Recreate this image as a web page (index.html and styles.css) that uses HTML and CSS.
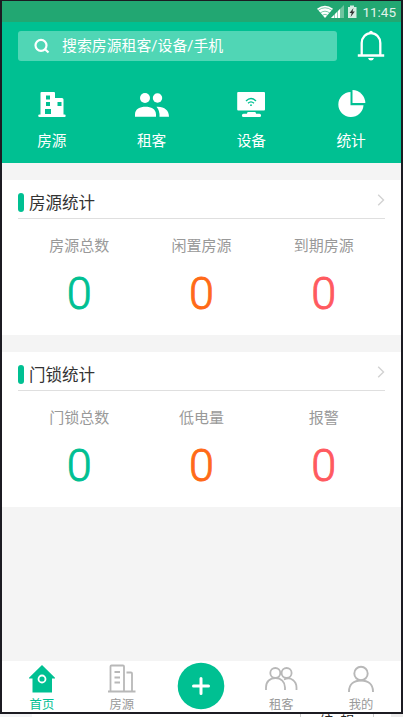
FILE: index.html
```html
<!DOCTYPE html>
<html lang="zh-CN">
<head>
<meta charset="utf-8">
<title>首页</title>
<link rel="stylesheet" href="styles.css">
</head>
<body>
<main class="phone">
  <div class="status">
    <svg class="status-icons" width="42" height="14" viewBox="0 0 42 14">
      <path d="M0 3.800Q8 -2.400 16 3.800L8 13Z" fill="#fff"/>
      <path d="M1 5.400Q8 .2 15 5.400M3.200 8Q8 4.400 12.800 8M5.400 10.200Q8 8.400 10.600 10.200" fill="none" stroke="#22a772" stroke-width=".6"/>
      <path d="M14 13L27 0V13Z" fill="#6fc5a0"/>
      <path d="M14 13L23 4V13Z" fill="#fff"/>
      <path d="M17.500 8V13M20.500 5V13" stroke="#22a772" stroke-width=".5"/>
      <path d="M31 2h2V.5h4V2h2.500v11h-8.500Z" fill="#d6eee4"/>
      <path d="M36.500 3L32.500 8h2.200L33.600 12l4.200-5.600h-2.300Z" fill="#333"/>
    </svg>
    <span>11:45</span>
  </div>
  <header class="header">
    <div class="search-row">
      <div class="search">
        <svg width="16" height="16" viewBox="0 0 16 16" fill="none" stroke="#fff" stroke-width="2.200"><circle cx="7" cy="7.300" r="5.500"/><path d="M11 11.300L14.500 14.500"/></svg>
        <span>搜索房源租客/设备/手机</span>
      </div>
      <svg class="bell" width="28" height="32" viewBox="0 0 28 32">
        <path d="M4.700 25V13a9.300 9.800 0 0 1 18.600 0V25M.8 25.500H27.200" fill="none" stroke="#fff" stroke-width="2.300"/>
        <circle cx="14" cy="2.500" r="1.800" fill="#fff"/><path d="M11 28h6q-.8 2.600-3 2.600T11 28Z" fill="#fff"/>
      </svg>
    </div>
    <nav class="shortcuts">
      <a><svg width="34" height="28" viewBox="0 0 34 28"><path fill="#fff" fill-rule="evenodd" d="M5.500 1Q5.500 0 6.500 0H19q1 0 1 1V6h7q1.500 0 1.500 1.500V22.500h1q1.200 0 1.200 1.300T29.500 25H4.500Q3.200 25 3.200 23.800T4.500 22.500h1ZM11 3.500v4h4v-4ZM11 10v4h4v-4ZM10 17v5h6V17ZM22.500 10v4h4v-4Z"/></svg><span>房源</span></a>
      <a><svg width="34" height="28" viewBox="0 0 34 28" fill="#fff"><circle cx="10" cy="6" r="5"/><circle cx="22.500" cy="6" r="4.700"/><path d="M0 24.800V22.500C0 17 5 14.800 10.500 14.800s10.500 2.200 10.500 7.700V24.800ZM21.500 14.800C29 14.300 34 18 34 24.800H24.500Q25 19 21.500 14.800Z"/></svg><span>租客</span></a>
      <a><svg width="34" height="28" viewBox="0 0 34 28"><rect x="3.200" y="0" width="27.800" height="18.500" rx="1" fill="#fff"/><path d="M14 20h7q1 0 1 1.800h3.500a1.600 1.600 0 0 1 0 3.200h-16a1.600 1.600 0 0 1 0-3.200H13q0-1.800 1-1.800Z" fill="#fff"/><path d="M12 9Q17 4 22 9M14 11.300Q17 8.500 20 11.300" fill="none" stroke="#00c092" stroke-width="1.300"/><circle cx="17" cy="13.200" r=".9" fill="#00c092"/></svg><span>设备</span></a>
      <a><svg width="34" height="28" viewBox="0 0 34 28" fill="#fff"><path d="M16.500 0A12.600 12.500 0 1 0 29.500 13.300H16.500Z"/><path d="M18.500-2A13 13 0 0 1 31.300 11H18.500Z"/></svg><span>统计</span></a>
    </nav>
  </header>
  <section class="card">
    <div class="card-head"><i class="mark"></i><h2>房源统计</h2><svg width="8" height="12" viewBox="0 0 8 12"><path d="M1.200 .8L6.500 6L1.200 11.200" fill="none" stroke="#d2d2d2" stroke-width="1.400"/></svg></div>
    <div class="stats">
      <div class="stat">房源总数<b class="green">0</b></div>
      <div class="stat">闲置房源<b class="orange">0</b></div>
      <div class="stat">到期房源<b class="red">0</b></div>
    </div>
  </section>
  <section class="card">
    <div class="card-head"><i class="mark"></i><h2>门锁统计</h2><svg width="8" height="12" viewBox="0 0 8 12"><path d="M1.200 .8L6.500 6L1.200 11.200" fill="none" stroke="#d2d2d2" stroke-width="1.400"/></svg></div>
    <div class="stats">
      <div class="stat">门锁总数<b class="green">0</b></div>
      <div class="stat">低电量<b class="orange">0</b></div>
      <div class="stat">报警<b class="red">0</b></div>
    </div>
  </section>
  <nav class="tabs">
    <a class="active"><svg width="34" height="30" viewBox="0 0 34 30"><path d="M17 1L30 13.700V14.500H27V28.500H7.500V14.500H4V13.700Z" fill="#00c092"/><circle cx="17" cy="15" r="3.500" fill="none" stroke="#fff" stroke-width="1.800"/></svg><span>首页</span></a>
    <a><svg width="34" height="30" viewBox="0 0 34 30" fill="none" stroke="#b8b8b8" stroke-width="1.800"><path d="M5.500 27V2.500q0-1 1-1H18q1 0 1 1V27M21.500 8.500H26q1 0 1 1V27M3 27.500H30.500M9.500 8h5.500M9.500 13.500h5.500M9.500 18.500h5.500"/></svg><span>房源</span></a>
    <a class="add"><svg width="48" height="48" viewBox="0 0 48 48"><circle cx="24" cy="24" r="23.300" fill="#00c092"/><path d="M24 16.500V31.500M16.500 24H31.500" stroke="#fff" stroke-width="3" stroke-linecap="round"/></svg></a>
    <a><svg width="34" height="30" viewBox="0 0 34 30" fill="none" stroke="#b8b8b8" stroke-width="1.800"><circle cx="11.300" cy="9" r="5"/><circle cx="22.600" cy="9" r="5"/><path d="M2 26V23.500C2 17.500 6 14 11.500 14S21 18 21 23.500V26M20 15.500C27 12 32.500 17.500 32.500 23.500V26"/></svg><span>租客</span></a>
    <a><svg width="34" height="30" viewBox="0 0 34 30" fill="none" stroke="#b8b8b8" stroke-width="1.900"><circle cx="17" cy="9.500" r="6.700"/><path d="M5 28V27.500C5 20 10 16.500 17 16.500S29 20 29 27.500V28"/></svg><span>我的</span></a>
  </nav>
</main>
<div class="below"><div class="edit">编&nbsp;&nbsp;辑</div></div>
</body>
</html>
```
FILE: styles.css
```css
* { box-sizing: border-box; }
body {
  margin: 0;
  height: 717px;
  overflow: hidden;
  background: #fff;
  font-family: Roboto, "Noto Sans CJK SC", sans-serif;
}
.phone {
  display: flex;
  flex-direction: column;
  height: 714px;
  border: solid #1c1b22;
  border-width: 1px 2px 2px;
  background: #f4f4f4;
}
svg { display: block; flex: none; }
.status {
  display: flex;
  justify-content: flex-end;
  align-items: center;
  height: 21px;
  padding-right: 5px;
  background: #22a772;
  color: #e0f3eb;
  font-size: 13.500px;
}
.status-icons { margin-right: 3px; }
.status span { padding-top: 1px; }
.header {
  height: 141px;
  padding: 9px 0 0;
  background: #00c092;
  color: #fff;
}
.search-row { display: flex; height: 32px; padding-left: 16px; }
.search {
  display: flex;
  align-items: center;
  width: 319px;
  height: 30px;
  padding-left: 16px;
  border-radius: 3px;
  background: #50d6b5;
  font-size: 14.900px;
  line-height: 30px;
}
.search span { margin-left: 12px; }
.bell { margin: -1px 0 0 20px; }
.shortcuts { display: flex; height: 80px; margin-top: 29px; }
.shortcuts a {
  display: flex;
  flex: 1;
  flex-direction: column;
  align-items: center;
  font-size: 14.700px;
  line-height: 22px;
}
.shortcuts svg { overflow: visible; }
.shortcuts span { margin-top: 10px; }
.card {
  height: 155px;
  margin-top: 17px;
  padding: 0 16px;
  background: #fff;
}
.card-head {
  display: flex;
  align-items: center;
  height: 39px;
  padding-top: 6px;
  border-bottom: 1px solid #dfdfdf;
}
.mark { width: 6px; height: 19px; border-radius: 3px; background: #00c092; }
h2 {
  flex: 1;
  margin: 3px 0 0 5px;
  color: #333;
  font-size: 16.500px;
  font-weight: 400;
  line-height: 24px;
}
.card-head svg { margin-top: -4px; }
.stats { display: grid; grid-template-columns: repeat(3, 1fr); padding-top: 16px; }
.stat { color: #999; font-size: 15px; line-height: 22px; text-align: center; }
.stat b {
  display: block;
  margin-top: 10px;
  font-size: 45px;
  font-weight: 300;
  line-height: 54px;
  -webkit-text-stroke: .9px currentColor;
}
.stat .green { color: #00c092; }
.stat .orange { color: #ff6a17; }
.stat .red { color: #ff5a5f; }
.tabs { display: flex; height: 51px; margin-top: auto; background: #fff; }
.tabs a {
  display: flex;
  flex: 1;
  flex-direction: column;
  align-items: center;
  padding-top: 3px;
  color: #999;
  font-size: 12.300px;
  line-height: 18px;
}
.tabs span { margin-top: 2px; }
.tabs .active { color: #00c092; }
.tabs .add { padding-top: 1px; }
.below {
  height: 3px;
  padding-left: 300px;
  overflow: hidden;
  background: linear-gradient(90deg, #f3f4f6 32px, #fff 32px, #fff 391px, #ececec 391px);
}
.edit {
  width: 74px;
  height: 24px;
  border: solid #ccc;
  border-width: 0 1px;
  color: #222;
  font-size: 14px;
  line-height: 14px;
  text-align: center;
}
```
